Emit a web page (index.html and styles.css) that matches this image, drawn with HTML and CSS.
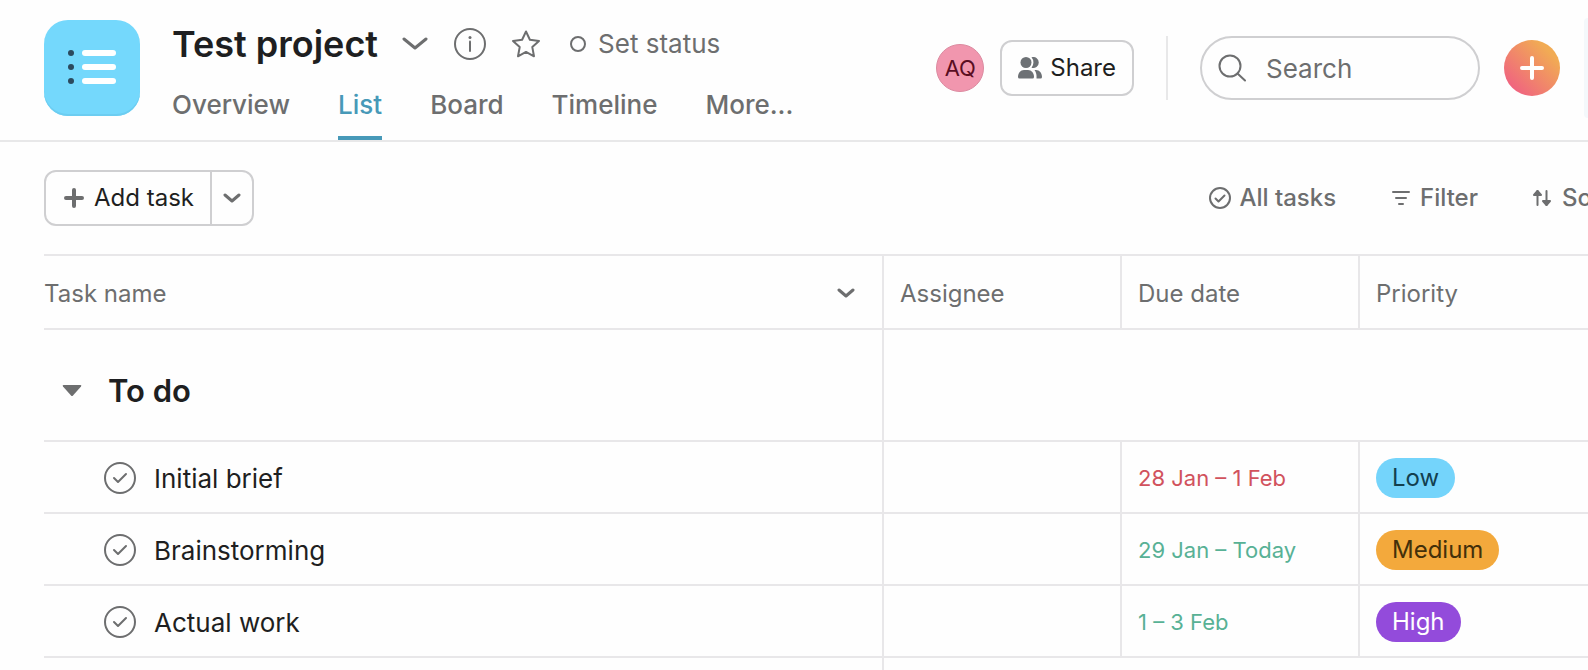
FILE: index.html
```html
<!DOCTYPE html>
<html lang="en">
<head>
  <meta charset="UTF-8">
  <meta name="viewport" content="width=device-width, initial-scale=1.0">
  <link rel="stylesheet" href="styles.css">
  <title>Test project</title>
</head>
<body>
  <header class="header">
    <div class="project-icon">
      <svg width="48" height="34" viewBox="0 0 48 34">
        <g fill="#2b4a5e">
          <circle cx="3" cy="3" r="3" />
          <circle cx="3" cy="17" r="3" />
          <circle cx="3" cy="31" r="3" />
        </g>
        <g fill="#fff">
          <rect x="14" y="0" width="34" height="6" rx="3" />
          <rect x="14" y="14" width="34" height="6" rx="3" />
          <rect x="14" y="28" width="34" height="6" rx="3" />
        </g>
      </svg>
    </div>

    <div class="project">
      <div class="title-row">
        <h1>Test project</h1>
        <button class="icon-btn chevron-btn" aria-label="Project actions">
          <svg width="26" height="14" viewBox="0 0 26 14" fill="none" stroke="currentColor" stroke-width="3" stroke-linecap="round" stroke-linejoin="round"><path d="M2 2l11 9 11-9" /></svg>
        </button>
        <button class="icon-btn info-btn" aria-label="Project details">
          <svg width="32" height="32" viewBox="0 0 32 32" fill="none" stroke="currentColor" stroke-width="2">
            <circle cx="16" cy="16" r="15" />
            <path d="M16 13.500v9.500" stroke-linecap="round" />
            <circle cx="16" cy="9.500" r="1.500" fill="currentColor" stroke="none" />
          </svg>
        </button>
        <button class="icon-btn star-btn" aria-label="Add to starred">
          <svg width="30" height="30" viewBox="0 0 30 30" fill="none" stroke="currentColor" stroke-width="2" stroke-linejoin="round"><path d="M15 2.500l3.900 8.200 9.100 1.200-6.700 6.200 1.700 9.200-8-4.400-8 4.400 1.700-9.200L2 11.900l9.100-1.200z" /></svg>
        </button>
        <button class="status-btn"><span class="status-dot"></span>Set status</button>
      </div>
      <nav class="tabs">
        <a href="#overview">Overview</a>
        <a href="#list" class="active">List</a>
        <a href="#board">Board</a>
        <a href="#timeline">Timeline</a>
        <a href="#more">More...</a>
      </nav>
    </div>

    <div class="header-right">
      <span class="avatar">AQ</span>
      <button class="share-btn">
        <svg width="24" height="22" viewBox="0 0 24 22" fill="currentColor">
          <circle cx="8" cy="5.500" r="5.500" />
          <path d="M13.500 0.300a5.500 5.500 0 1 1 0 10.400a8 8 0 0 0 0-10.400z" />
          <path d="M0 20c0-4 2.500-7 6-7h4c3.500 0 6 3 6 7q0 1.500-1.500 1.500h-13Q0 21.500 0 20z" />
          <path d="M16.500 13H18c3.500 0 6 3 6 7q0 1.500-1.500 1.500h-4q.5-5-2-8.500z" />
        </svg>
        Share
      </button>
      <div class="divider"></div>
      <label class="search">
        <svg width="28" height="28" viewBox="0 0 28 28" fill="none" stroke="currentColor" stroke-width="2" stroke-linecap="round"><circle cx="12" cy="12" r="10.500" /><path d="M19.500 19.500l7.500 7" /></svg>
        <input type="text" placeholder="Search" aria-label="Search">
      </label>
      <button class="create-btn" aria-label="Create">
        <svg width="24" height="24" viewBox="0 0 24 24" stroke="#fff" stroke-width="4" stroke-linecap="round"><path d="M12 2v20M2 12h20" /></svg>
      </button>
      <div class="side-panel"></div>
    </div>
  </header>

  <main>
    <div class="toolbar">
      <div class="add-task">
        <button class="add-btn">
          <svg width="20" height="20" viewBox="0 0 20 20" stroke="#6d6e6f" stroke-width="4" stroke-linecap="round"><path d="M10 2v16M2 10h16" /></svg>
          Add task
        </button>
        <button class="add-more" aria-label="More options">
          <svg width="18" height="12" viewBox="0 0 18 12" fill="none" stroke="currentColor" stroke-width="3" stroke-linecap="round" stroke-linejoin="round"><path d="M2 3l7 6 7-6" /></svg>
        </button>
      </div>
      <div class="view-options">
        <button class="all-tasks">
          <svg width="22" height="22" viewBox="0 0 22 22" fill="none" stroke="currentColor" stroke-width="2" stroke-linecap="round" stroke-linejoin="round"><circle cx="11" cy="11" r="10" /><path d="M6.500 11.500l3 3 6-6" /></svg>
          All tasks
        </button>
        <button class="filter">
          <svg width="18" height="16" viewBox="0 0 18 16" stroke="currentColor" stroke-width="2" stroke-linecap="round"><path d="M1 2h16M4 8h10M7 14h4" /></svg>
          Filter
        </button>
        <button class="sort">
          <svg width="20" height="18" viewBox="0 0 20 18" fill="currentColor" stroke="currentColor" stroke-width="2" stroke-linecap="round" stroke-linejoin="round"><path d="M5.500 16V2M14.500 2v14" /><path d="M5.500 2L2 6h7zM14.500 16L11 12h7z" /></svg>
          Sort
        </button>
      </div>
    </div>

    <table class="tasks">
      <thead>
        <tr>
          <th>
            <div class="name-head">
              Task name
              <svg width="18" height="12" viewBox="0 0 18 12" fill="none" stroke="currentColor" stroke-width="3" stroke-linecap="round" stroke-linejoin="round"><path d="M2 2l7 6 7-6" /></svg>
            </div>
          </th>
          <th class="col">Assignee</th>
          <th class="col">Due date</th>
          <th class="col-last">Priority</th>
        </tr>
      </thead>
      <tbody>
        <tr class="section">
          <td>
            <div class="section-head">
              <button class="icon-btn" aria-label="Collapse section">
                <svg width="20" height="12" viewBox="0 0 20 12" fill="currentColor"><path d="M1.500 0h17q1.500 0 .5 1.500l-8 9q-1 1-2 0l-8-9Q0 0 1.500 0z" /></svg>
              </button>
              <h2>To do</h2>
            </div>
          </td>
          <td colspan="3"></td>
        </tr>
        <tr>
          <td>
            <label class="task">
              <span class="check">
                <input type="checkbox">
                <svg width="16" height="12" viewBox="0 0 16 12"><path d="M2 6l4 4 8-8" /></svg>
              </span>
              <span class="task-name">Initial brief</span>
            </label>
          </td>
          <td></td>
          <td class="date overdue">28 Jan – 1 Feb</td>
          <td><span class="pill low">Low</span></td>
        </tr>
        <tr>
          <td>
            <label class="task">
              <span class="check">
                <input type="checkbox">
                <svg width="16" height="12" viewBox="0 0 16 12"><path d="M2 6l4 4 8-8" /></svg>
              </span>
              <span class="task-name">Brainstorming</span>
            </label>
          </td>
          <td></td>
          <td class="date">29 Jan – Today</td>
          <td><span class="pill medium">Medium</span></td>
        </tr>
        <tr>
          <td>
            <label class="task">
              <span class="check">
                <input type="checkbox">
                <svg width="16" height="12" viewBox="0 0 16 12"><path d="M2 6l4 4 8-8" /></svg>
              </span>
              <span class="task-name">Actual work</span>
            </label>
          </td>
          <td></td>
          <td class="date">1 – 3 Feb</td>
          <td><span class="pill high">High</span></td>
        </tr>
        <tr class="spacer">
          <td></td>
          <td colspan="3"></td>
        </tr>
      </tbody>
    </table>
  </main>
</body>
</html>
```
FILE: styles.css
```css
* {
  box-sizing: border-box;
}

body {
  margin: 0;
  background: #fefefe;
  color: #1e1f21;
  font-family: Inter, "Liberation Sans", sans-serif;
  font-size: 24px;
  line-height: 32px;
}

button {
  margin: 0;
  padding: 0;
  border: none;
  background: none;
  color: #6d6e6f;
  font: inherit;
  white-space: nowrap;
  cursor: pointer;
}

svg {
  display: block;
  flex-shrink: 0;
}

/* header */
.header {
  display: flex;
  align-items: flex-start;
  padding: 20px 0 0 44px;
  border-bottom: 2px solid #e8e8e9;
}

.project-icon {
  display: flex;
  align-items: center;
  justify-content: center;
  flex-shrink: 0;
  width: 96px;
  height: 96px;
  margin-right: 32px;
  padding-bottom: 2px;
  border-radius: 24px;
  background: #74d8fc;
  box-shadow: inset 0 -2px 0 #6ccdf1;
}

.title-row {
  display: flex;
  align-items: center;
  height: 48px;
}

h1 {
  margin: 0;
  font-size: 36px;
  font-weight: 600;
  line-height: 48px;
  white-space: nowrap;
}

.chevron-btn {
  margin-left: 24px;
}

.info-btn {
  margin-left: 26px;
}

.star-btn {
  margin-left: 25px;
}

.status-btn {
  display: flex;
  align-items: center;
  gap: 12px;
  margin-left: 29px;
  font-size: 26px;
}

.status-dot {
  width: 16px;
  height: 16px;
  border: 2px solid #6d6e6f;
  border-radius: 50%;
}

.tabs {
  display: flex;
  gap: 48px;
  margin-top: 20px;
}

.tabs a {
  height: 52px;
  color: #6d6e6f;
  font-size: 26px;
  font-weight: 500;
  line-height: 34px;
  text-decoration: none;
  white-space: nowrap;
}

.tabs .active {
  border-bottom: 4px solid #4799b8;
  color: #4799b8;
}

.header-right {
  display: flex;
  align-items: center;
  height: 96px;
  margin-left: auto;
}

.avatar {
  width: 48px;
  height: 48px;
  margin-right: 16px;
  border: 1px solid #dc8aa0;
  border-radius: 50%;
  background: #f196ae;
  color: #5a0d22;
  font-size: 22px;
  line-height: 46px;
  text-align: center;
}

.share-btn {
  display: flex;
  align-items: center;
  gap: 8px;
  height: 56px;
  padding: 0 16px;
  border: 2px solid #cfcfd1;
  border-radius: 12px;
  color: #1e1f21;
}

.share-btn svg {
  color: #6d7175;
}

.divider {
  width: 2px;
  height: 64px;
  margin: 0 32px;
  background: #e8e8e9;
}

.search {
  display: flex;
  align-items: center;
  gap: 20px;
  width: 280px;
  height: 64px;
  margin-right: 24px;
  padding: 0 16px;
  border: 2px solid #cfcfd1;
  border-radius: 32px;
  color: #6d6e6f;
}

.search input {
  flex: 1;
  min-width: 0;
  padding: 2px 0 0;
  border: none;
  outline: none;
  background: none;
  color: #1e1f21;
  font: inherit;
  font-size: 26px;
}

.search input::placeholder {
  color: #6d6e6f;
  opacity: 1;
}

.create-btn {
  display: flex;
  align-items: center;
  justify-content: center;
  width: 56px;
  height: 56px;
  margin-right: 24px;
  border-radius: 50%;
  background: linear-gradient(45deg, #f0657f 15%, #f1ab54 80%);
}

.side-panel {
  width: 4px;
  height: 100px;
  border-radius: 4px 0 0 4px;
  background: #f4f8fb;
}

/* toolbar */
.toolbar {
  display: flex;
  align-items: center;
  justify-content: space-between;
  height: 112px;
  padding-left: 44px;
}

.add-task {
  display: flex;
  height: 56px;
  border: 2px solid #cfcfd1;
  border-radius: 12px;
}

.add-btn {
  display: flex;
  align-items: center;
  gap: 10px;
  padding: 0 16px 0 18px;
  border-right: 2px solid #cfcfd1;
  color: #1e1f21;
}

.add-more {
  display: flex;
  align-items: center;
  justify-content: center;
  width: 40px;
}

.view-options {
  display: flex;
  gap: 54px;
}

.view-options button {
  display: flex;
  align-items: center;
  gap: 10px;
  font-weight: 500;
}

.view-options .all-tasks {
  gap: 8px;
  padding-right: 2px;
}

.view-options .sort {
  width: 56px;
  overflow: hidden;
}

/* task list */
main {
  overflow: hidden;
}

.tasks {
  width: calc(100% - 44px);
  margin-left: 44px;
  border-top: 2px solid #e8e7e9;
  border-spacing: 0;
  table-layout: fixed;
}

.tasks th,
.tasks td {
  height: 72px;
  padding: 2px 16px 0;
  border-right: 2px solid #e8e7e9;
  border-bottom: 2px solid #e8e7e9;
  text-align: left;
  white-space: nowrap;
}

.tasks th {
  height: 74px;
  padding-top: 4px;
  color: #6d6e6f;
  font-weight: 400;
}

.tasks th:first-child,
.tasks td:first-child {
  padding-left: 0;
}

.tasks th:last-child,
.tasks td:last-child {
  border-right: none;
}

.tasks .col {
  width: 238px;
}

.tasks .col-last {
  width: 228px;
}

.name-head {
  display: flex;
  align-items: center;
  justify-content: space-between;
  padding-right: 11px;
}

.tasks .section td {
  height: 112px;
}

.section-head {
  display: flex;
  align-items: center;
  gap: 26px;
  padding: 10px 0 0 18px;
}

h2 {
  margin: 0;
  font-size: 31px;
  font-weight: 600;
  line-height: 40px;
}

.task {
  display: flex;
  align-items: center;
  gap: 18px;
  padding-left: 60px;
  font-size: 26px;
}

.task-name {
  padding-top: 2px;
}

.check {
  display: grid;
  place-items: center;
}

.check input {
  grid-area: 1 / 1;
  appearance: none;
  width: 32px;
  height: 32px;
  margin: 0;
  border: 2px solid #6d6e6f;
  border-radius: 50%;
}

.check svg {
  grid-area: 1 / 1;
  fill: none;
  stroke: #6d6e6f;
  stroke-width: 2;
  stroke-linecap: round;
  stroke-linejoin: round;
}

.tasks .date {
  color: #58b195;
  font-size: 22px;
}

.tasks .overdue {
  color: #d1525d;
}

.pill {
  display: inline-block;
  height: 40px;
  padding: 0 16px;
  border-radius: 20px;
  line-height: 40px;
  vertical-align: middle;
}

.low {
  background: #74d4fb;
  color: #12404f;
}

.medium {
  background: #f3a93c;
  color: #43300a;
}

.high {
  background: #934bdb;
  color: #fff;
}

.tasks .spacer td {
  height: 12px;
  border-bottom: none;
}
```
